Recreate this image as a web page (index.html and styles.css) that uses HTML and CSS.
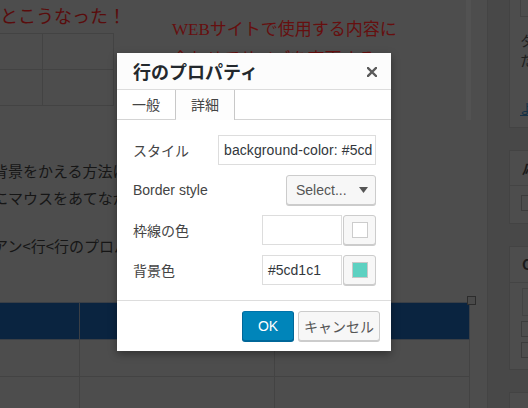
FILE: index.html
```html
<!DOCTYPE html>
<html lang="ja">
<head>
<meta charset="utf-8">
<title>行のプロパティ</title>
<link rel="stylesheet" href="styles.css">
</head>
<body>
<div class="screen">
  <div class="editor">
    <div class="content">
      <div class="top">
        <div class="top-left">
          <div class="red-title">とこうなった！</div>
          <table class="mini">
            <tr><td class="c1"></td><td class="c2"></td></tr>
            <tr><td class="c1"></td><td class="c2"></td></tr>
          </table>
        </div>
        <div class="top-right">
          <p class="red-serif">WEBサイトで使用する内容に<br>合わせてサイズを変更する。</p>
        </div>
      </div>
      <p class="para p1">背景をかえる方法は以下のとおりです。<br>にマウスをあてながら右クリックします。</p>
      <p class="para p2">アン&lt;行&lt;行のプロパティを選択します。</p>
      <div class="table-wrap">
        <table class="data">
          <tr class="head"><td class="col1"></td><td class="col2"></td><td class="col3"></td></tr>
          <tr><td class="col1"></td><td class="col2"></td><td class="col3"></td></tr>
          <tr><td class="col1"></td><td class="col2"></td><td class="col3"></td></tr>
        </table>
        <span class="handle"></span>
      </div>
    </div>
    <div class="scroll"></div>
  </div>
  <aside class="sidebar">
    <div class="panel panel-a">
      <div class="box-input"></div>
      <div class="side-text first">タグ</div>
      <div class="side-text">た</div>
      <div class="side-link">よく</div>
    </div>
    <div class="panel panel-b">
      <div class="panel-head"><em>応</em></div>
      <div class="panel-body"><span class="check"></span></div>
    </div>
    <div class="panel panel-c">
      <div class="panel-head">C</div>
      <div class="panel-body">
        <div class="box-list"></div>
        <span class="check"></span>
        <span class="check"></span>
      </div>
    </div>
    <div class="panel panel-d"></div>
  </aside>
</div>

<div class="dialog">
  <div class="dlg-head">
    <span class="dlg-title">行のプロパティ</span>
    <svg class="close" width="10" height="10" viewBox="0 0 10 10"><path d="M1 1L9 9M9 1L1 9" stroke="#5a5a5a" stroke-width="2.4" stroke-linecap="square"/></svg>
  </div>
  <div class="tabs">
    <span class="tab">一般</span>
    <span class="tab active">詳細</span>
  </div>
  <div class="dlg-body">
    <div class="row">
      <span class="label">スタイル</span>
      <span class="input input-style"><span class="value">background-color: #5cd1c1</span></span>
    </div>
    <div class="row">
      <span class="label">Border style</span>
      <span class="select">Select...<svg class="caret" width="9" height="6" viewBox="0 0 9 6"><path d="M0 0H9L4.5 6Z" fill="#555"/></svg></span>
    </div>
    <div class="row">
      <span class="label">枠線の色</span>
      <span class="color-field">
        <span class="input input-color"></span>
        <span class="color-btn"><span class="swatch"></span></span>
      </span>
    </div>
    <div class="row">
      <span class="label">背景色</span>
      <span class="color-field">
        <span class="input input-color">#5cd1c1</span>
        <span class="color-btn"><span class="swatch filled"></span></span>
      </span>
    </div>
  </div>
  <div class="dlg-foot">
    <button class="btn primary">OK</button>
    <button class="btn">キャンセル</button>
  </div>
</div>
</body>
</html>
```
FILE: styles.css
```css
html, body {
  margin: 0;
  padding: 0;
}
body {
  width: 528px;
  height: 408px;
  overflow: hidden;
  background: #484848;
  font-family: "Noto Sans CJK JP", sans-serif;
  position: relative;
}
.screen {
  display: flex;
  height: 408px;
}
.editor {
  width: 487px;
  flex: none;
  display: flex;
  background: #4d4d4d;
  border-right: 1px solid #444;
}
.content {
  width: 466px;
  flex: none;
  position: relative;
}
.scroll {
  width: 5px;
  height: 120px;
  background: #525252;
}
.top {
  display: flex;
  height: 120px;
}
.top-left {
  width: 172px;
  flex: none;
}
.red-title {
  color: #5a0c0c;
  font-size: 18px;
  line-height: 30px;
  height: 33px;
  white-space: nowrap;
}
.mini {
  border-collapse: collapse;
  margin-left: -1px;
}
.mini td {
  border: 1px solid #434343;
  height: 35px;
  padding: 0;
}
.mini .c1 { width: 42px; }
.mini .c2 { width: 70px; }
.top-right {
  padding-top: 15px;
}
.red-serif {
  margin: 0;
  color: #660f0f;
  font-family: "Liberation Serif", "Noto Sans CJK JP", serif;
  font-size: 17px;
  line-height: 30px;
  white-space: nowrap;
}
.para {
  margin: 0;
  color: #161616;
  font-size: 15px;
  line-height: 27px;
  white-space: nowrap;
  margin-left: -7px;
}
.p1 { margin-top: 37px; }
.p2 { margin-top: 21px; }
.table-wrap {
  margin-top: 43px;
  position: relative;
  width: 470px;
}
.data {
  border-collapse: collapse;
  margin-left: -1px;
}
.data td {
  border: 1px solid #434343;
  padding: 0;
  height: 36px;
}
.data .head td {
  background: #0a2440;
  border-color: #3a3f46;
}
.data .col1 { width: 79px; }
.data .col2 { width: 195px; }
.data .col3 { width: 194px; }
.handle {
  position: absolute;
  left: 467px;
  top: -6px;
  width: 7px;
  height: 7px;
  border: 1px solid #2c2c2c;
  background: #4a4a4a;
}
.sidebar {
  flex: 1;
  padding-left: 21px;
  overflow: hidden;
}
.panel {
  background: #4d4d4d;
  border: 1px solid #434343;
  margin-bottom: 22px;
  width: 200px;
  box-sizing: border-box;
}
.panel-a {
  margin-top: -20px;
  height: 148px;
  padding: 0 0 0 10px;
}
.box-input {
  width: 100px;
  height: 36px;
  border: 1px solid #424242;
  box-sizing: border-box;
}
.side-text {
  color: #1e1e1e;
  font-size: 14px;
  line-height: 20px;
}
.side-text.first {
  margin-top: 13px;
}
.side-link {
  margin-top: 28px;
  color: #163246;
  font-size: 14px;
  line-height: 20px;
  text-decoration: underline;
}
.panel-head {
  height: 34px;
  line-height: 34px;
  padding-left: 12px;
  font-size: 14px;
  font-weight: bold;
  color: #1a1a1a;
  border-bottom: 1px solid #444;
}
.panel-b { height: 74px; }
.panel-b .panel-body {
  padding: 9px 0 0 11px;
}
.check {
  display: block;
  width: 14px;
  height: 14px;
  border: 1px solid #3c3c3c;
  margin-bottom: 5px;
}
.panel-c { height: 124px; }
.panel-c .panel-head {
  height: 35px;
  line-height: 35px;
}
.panel-c .panel-body {
  padding: 5px 0 0 12px;
}
.box-list {
  width: 100px;
  height: 26px;
  border: 1px solid #434343;
  margin-bottom: 5px;
}
.panel-c .check { margin-left: -1px; }
.panel-d { height: 40px; }

/* Dialog */
.dialog {
  position: absolute;
  left: 117px;
  top: 53px;
  width: 274px;
  background: #fff;
  box-shadow: 0 3px 8px rgba(0, 0, 0, 0.35);
  font-family: "Liberation Sans", "Noto Sans CJK JP", sans-serif;
  color: #444;
}
.dlg-head {
  height: 36px;
  border-bottom: 1px solid #dcdcdc;
  background: #fcfcfc;
  display: flex;
  align-items: center;
  justify-content: space-between;
  padding: 0 14px 0 16px;
}
.dlg-title {
  font-size: 18px;
  font-weight: bold;
  color: #23282d;
  font-family: "Noto Sans CJK JP", sans-serif;
}
.close {
  margin-top: 1px;
}
.tabs {
  display: flex;
  height: 29px;
  border-bottom: 1px solid #d4d4d4;
  background: #fff;
}
.tab {
  padding: 0 15px;
  line-height: 29px;
  font-size: 14px;
  color: #444;
  border-right: 1px solid #c8c8c8;
  font-family: "Noto Sans CJK JP", sans-serif;
}
.tab.active {
  background: #fdfdfd;
  height: 30px;
  margin-bottom: -1px;
}
.dlg-body {
  padding: 15px 15px 15px 16px;
  display: flex;
  flex-direction: column;
  gap: 10px;
}
.row {
  display: flex;
  align-items: center;
  justify-content: space-between;
  height: 30px;
}
.label {
  font-size: 14px;
  color: #444;
}
.input {
  box-sizing: border-box;
  height: 30px;
  border: 1px solid #ddd;
  background: #fff;
  font-size: 14px;
  color: #32373c;
  line-height: 28px;
  padding: 0 5px;
  white-space: nowrap;
  overflow: hidden;
}
.input-style {
  width: 158px;
  padding-right: 2px;
}
.value {
  display: block;
  overflow: hidden;
  letter-spacing: 0.1px;
}
.select {
  box-sizing: border-box;
  width: 90px;
  height: 30px;
  border: 1px solid #ccc;
  border-radius: 3px;
  background: #f7f7f7;
  box-shadow: 0 1px 0 #ccc;
  font-size: 14px;
  color: #555;
  display: flex;
  align-items: center;
  justify-content: space-between;
  padding: 0 7px 0 9px;
  margin-top: -1px;
}
.color-field {
  display: flex;
  gap: 1px;
}
.input-color {
  width: 80px;
}
.color-btn {
  box-sizing: border-box;
  width: 33px;
  height: 30px;
  border: 1px solid #ccc;
  border-radius: 3px;
  background: #f7f7f7;
  box-shadow: 0 1px 0 #ccc;
  display: flex;
  align-items: center;
  justify-content: center;
}
.swatch {
  width: 14px;
  height: 14px;
  border: 1px solid #ccc;
  background: #fff;
}
.swatch.filled {
  background: #5cd1c1;
  border-color: #c8c8c8;
}
.dlg-foot {
  border-top: 1px solid #ddd;
  padding: 10px 11px 10px 0;
  display: flex;
  justify-content: flex-end;
  gap: 4px;
}
.btn {
  box-sizing: border-box;
  height: 30px;
  border: 1px solid #ccc;
  border-radius: 3px;
  background: #f7f7f7;
  box-shadow: 0 1px 0 #ccc;
  color: #555;
  font-size: 14px;
  font-family: "Noto Sans CJK JP", sans-serif;
  padding: 0;
  margin: 0;
  width: 82px;
  white-space: nowrap;
}
.btn.primary {
  width: 52px;
  background: #0085ba;
  border-color: #0073aa #006799 #006799;
  box-shadow: 0 1px 0 #006799;
  color: #fff;
  font-family: "Liberation Sans", sans-serif;
}
```
